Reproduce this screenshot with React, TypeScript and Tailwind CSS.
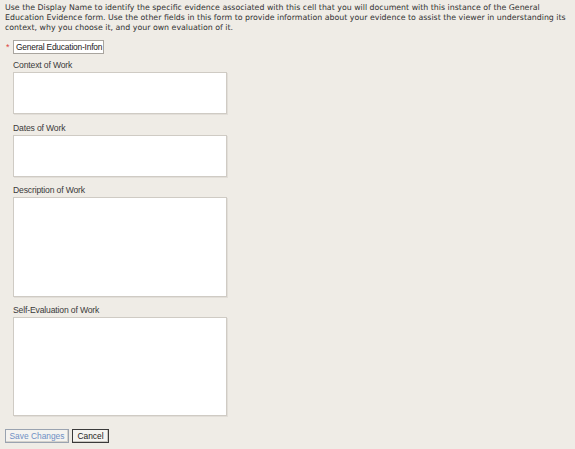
import React from "react";

function Field({ label, h, mt }: { label: string; h: string; mt: string }) {
  return (
    <div className={mt}>
      <div className="text-[8.6px] leading-[10px] text-[#3a3a3a] font-['Liberation_Sans',Arial,sans-serif] tracking-[-0.15px]">
        {label}
      </div>
      <div
        className={`mt-[2px] w-[214px] ${h} bg-white border border-[#cfcbc4] shadow-[1px_1px_0_#e2ded8]`}
      />
    </div>
  );
}

export default function App() {
  return (
    <div className="w-[575px] h-[449px] bg-[#efece6] overflow-hidden">
      <p className="pl-[5px] pt-[3px] pr-0 text-[7.85px] leading-[10px] text-[#333] font-['DejaVu_Sans',Verdana,sans-serif]">
        Use the Display Name to identify the specific evidence associated with this cell that you will document with this instance of the General Education Evidence form. Use the other fields in this form to provide information about your evidence to assist the viewer in understanding its context, why you choose it, and your own evaluation of it.
      </p>
      <div className="flex items-center mt-[7px] pl-[6px]">
        <span className="text-[#d44] text-[9px] leading-[10px] w-[7px] font-['Liberation_Sans',Arial,sans-serif]">*</span>
        <div className="w-[91px] h-[14px] bg-white border border-[#a9a59f] flex items-center pl-[2px] overflow-hidden whitespace-nowrap text-[8.4px] text-[#222] font-['Liberation_Sans',Arial,sans-serif] tracking-[-0.2px]">
          General Education-Infon
        </div>
      </div>
      <div className="pl-[13px]">
        <Field label="Context of Work" h="h-[42px]" mt="mt-[6px]" />
        <Field label="Dates of Work" h="h-[42px]" mt="mt-[9px]" />
        <Field label="Description of Work" h="h-[100px]" mt="mt-[8px]" />
        <Field label="Self-Evaluation of Work" h="h-[99px]" mt="mt-[8px]" />
      </div>
      <div className="flex gap-[3px] pl-[5px] mt-[13px] font-['Liberation_Sans',Arial,sans-serif] text-[8.4px] leading-[10px]">
        <div className="w-[64px] h-[14px] border border-[#9aa3b0] bg-[#f4f3f0] text-[#6f8fc4] flex items-center justify-center shadow-[inset_-1px_-1px_0_#d5d2cc]">
          Save Changes
        </div>
        <div className="w-[37px] h-[14px] border border-[#3a3a3a] bg-[#f4f3f0] text-[#222] flex items-center justify-center shadow-[inset_-1px_-1px_0_#c8c5bf]">
          Cancel
        </div>
      </div>
    </div>
  );
}
